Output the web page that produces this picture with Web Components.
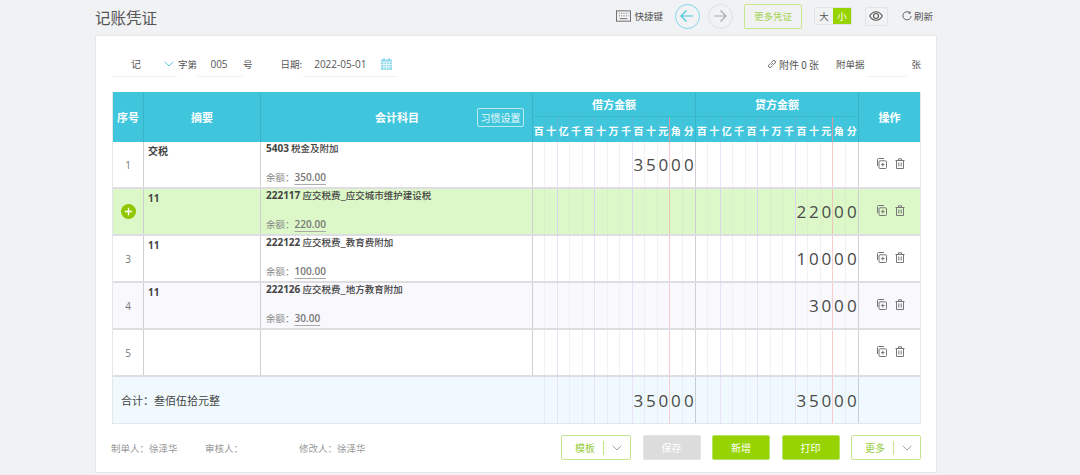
<!DOCTYPE html>
<html lang="zh">
<head>
<meta charset="utf-8">
<title>记账凭证</title>
<style>
  html, body { margin: 0; height: 100%; background: #f1f2f4; overflow: hidden; }
  body { font-family: "Noto Sans CJK SC", "Noto Sans", sans-serif; color: #555; }
</style>
</head>
<body>
<voucher-page></voucher-page>
<script>
const DIGIT_LABELS = ["百", "十", "亿", "千", "百", "十", "万", "千", "百", "十", "元", "角", "分"];

const ICONS = {
  keyboard: `<svg width="15" height="12" viewBox="0 0 16 12" fill="none" stroke="#666" stroke-width="1"><rect x=".5" y=".5" width="15" height="11"/><path d="M3 3h1M5.500 3h1M8 3h1M10.500 3h1M13 3h.5M3 5.800h1M5.500 5.800h1M8 5.800h1M10.500 5.800h1M13 5.800h.5M4 8.800h8"/></svg>`,
  chevron: `<svg width="10" height="6" viewBox="0 0 10 6" fill="none" stroke="currentColor" stroke-width="1"><path d="M.7.700 5 5l4.300-4.300"/></svg>`,
  back: `<svg width="14" height="14" viewBox="0 0 14 14" fill="none" stroke="#45c6e0" stroke-width="1.200"><path d="M13 7H1M6.500 1.500 1 7l5.500 5.500"/></svg>`,
  forward: `<svg width="14" height="14" viewBox="0 0 14 14" fill="none" stroke="#aaa" stroke-width="1.200"><path d="M1 7h12M7.500 1.500 13 7l-5.500 5.500"/></svg>`,
  eye: `<svg width="14" height="10" viewBox="0 0 14 10" fill="none" stroke="#555" stroke-width="1.100"><path d="M.7 5C2.500 1.800 4.500.7 7 .7s4.500 1.100 6.300 4.300C11.500 8.200 9.500 9.300 7 9.300S2.500 8.200.7 5z"/><circle cx="7" cy="5" r="2.500"/></svg>`,
  refresh: `<svg width="10" height="10" viewBox="0 0 11 11" fill="none" stroke="#555" stroke-width="1"><path d="M8.800 2.200A4.500 4.500 0 1 0 10 5.500M9 .5v2H7"/></svg>`,
  link: `<svg width="10" height="10" viewBox="0 0 10 10" fill="none" stroke="#666" stroke-width="1"><path d="M4.200 5.800 5.800 4.200M3.500 4.300 1.700 6.100a1.600 1.600 0 0 0 2.200 2.200l1.800-1.800M6.500 5.700l1.800-1.800a1.600 1.600 0 0 0-2.200-2.200L4.300 3.500"/></svg>`,
  calendar: `<svg width="11" height="12" viewBox="0 0 11 12"><path fill="#8fd9ea" d="M0 1.500h11V12H0z"/><path stroke="#fff" stroke-width=".7" d="M0 4h11M0 6.500h11M0 9h11M3 4v8M5.500 4v8M8 4v8"/><path stroke="#5cc9e2" d="M3 0v2M8 0v2"/></svg>`,
  copy: `<svg width="11" height="11" viewBox="0 0 11 11" fill="none" stroke="#777" stroke-width="1"><path d="M1.500 8V1.500A1 1 0 0 1 2.500.5H8"/><rect x="3" y="2.800" width="7.500" height="7.700" rx="1"/><path d="M6.800 4.800v3.600M5 6.600h3.600"/></svg>`,
  trash: `<svg width="10" height="11" viewBox="0 0 10 11" fill="none" stroke="#777" stroke-width="1"><path d="M.5 2.500h9M3.500 2.500V.8h3v1.700M1.500 2.500v8h7v-8M3.800 4.500v4M6.200 4.500v4"/></svg>`,
  plus: `<svg width="15" height="15" viewBox="0 0 15 15"><circle cx="7.500" cy="7.500" r="7.500" fill="#8fc800"/><path stroke="#fff" stroke-width="1.400" d="M3.800 7.500h7.400M7.500 3.800v7.400"/></svg>`
};

class DigitCells extends HTMLElement {
  connectedCallback() {
    const root = this.shadowRoot || this.attachShadow({ mode: "open" });
    const isHead = this.hasAttribute("head");
    const value = this.getAttribute("value") || "";
    const cells = DIGIT_LABELS.map((label, i) => {
      const digit = value[i - (13 - value.length)] || "";
      const kind = i === 10 ? "red" : (i === 1 || i === 4 || i === 7) ? "purple" : "";
      return `<span class="${kind}">${isHead ? label : digit}</span>`;
    }).join("");
    root.innerHTML = `
      <style>
        :host {
          display: grid;
          grid-template-columns: repeat(13, 1fr);
          height: 100%;
        }
        span {
          display: flex;
          align-items: center;
          justify-content: center;
          box-sizing: border-box;
          border-right: 1px solid var(--digit-line, #f1f1f4);
          font-family: "Open Sans", sans-serif;
          font-size: 17px;
          color: #4a4a4a;
          min-width: 0;
        }
        span:last-child { border-right: 0; }
        .purple { border-right-color: var(--digit-purple, #e8e1f8); }
        .red { border-right-color: var(--digit-red, #f8cccc); }
        :host([head]) span {
          font-family: "Noto Sans CJK SC", sans-serif;
          font-size: 10px;
          font-weight: 700;
          color: #fff;
          padding-top: 1px;
        }
      </style>
      ${cells}
    `;
  }
}
customElements.define("digit-cells", DigitCells);

class VoucherRow extends HTMLElement {
  connectedCallback() {
    const root = this.shadowRoot || this.attachShadow({ mode: "open" });
    const seq = this.getAttribute("seq");
    const note = this.getAttribute("note") || "";
    const code = this.getAttribute("code") || "";
    const name = this.getAttribute("name") || "";
    const balance = this.getAttribute("balance");
    const seqCell = this.hasAttribute("active") ? ICONS.plus : seq;
    const subject = code ? `
      <div class="title"><b>${code}</b> ${name}</div>
      <div class="balance">余额：<u>${balance}</u></div>` : "";
    root.innerHTML = `
      <style>
        :host {
          display: grid;
          grid-template-columns: 31px 117px 272px 163px 163px 1fr;
          height: 47px;
          box-sizing: border-box;
          border-bottom: 2px solid #dddde2;
          background: #fff;
          font-size: 10px;
          color: #444;
        }
        :host([active]) { background: #dcf7c8; --digit-line: #d6efc4; --digit-purple: #d8d3ef; --digit-red: #f0c4b6; }
        :host([tint]) { background: #f8f8fd; }
        .cell { box-sizing: border-box; border-right: 1px solid #cfcfd4; min-width: 0; }
        .cell:last-child { border-right: 0; }
        .seq { display: flex; align-items: center; justify-content: center; color: #777; font-size: 10px; font-family: "Open Sans", sans-serif; }
        .note { padding: 0 0 0 4px; font-weight: 700; line-height: 18px; font-size: 10px; font-family: "Open Sans", "Noto Sans CJK SC", sans-serif; }
        .subject { display: flex; flex-direction: column; justify-content: space-between; padding: 0 0 1px 5px; }
        .title { line-height: 12px; white-space: nowrap; font-size: 9.500px; font-weight: 500; }
        .title b { font-family: "Open Sans", sans-serif; font-weight: 700; font-size: 10px; }
        .balance { color: #888; line-height: 17px; font-size: 9.500px; }
        .balance u { font-family: "Open Sans", sans-serif; font-size: 10px; color: #777; font-weight: 600; text-underline-offset: 3px; text-decoration-color: #aaa; }
        .ops { display: flex; align-items: center; justify-content: center; gap: 8px; padding: 0 0 2px 2px; }
        .ops svg { display: block; }
      </style>
      <div class="cell seq">${seqCell}</div>
      <div class="cell note">${note}</div>
      <div class="cell subject">${subject}</div>
      <div class="cell"><digit-cells value="${this.getAttribute("debit") || ""}"></digit-cells></div>
      <div class="cell"><digit-cells value="${this.getAttribute("credit") || ""}"></digit-cells></div>
      <div class="cell ops">${ICONS.copy}${ICONS.trash}</div>
    `;
  }
}
customElements.define("voucher-row", VoucherRow);

class VoucherTable extends HTMLElement {
  constructor() {
    super();
    this.attachShadow({ mode: "open" });
    this.shadowRoot.innerHTML = `
      <style>
        :host { display: block; border-right: 1px solid #e4e6e8; border-left: 1px solid #e4e6e8; }
        .head {
          display: grid;
          grid-template-columns: 31px 117px 272px 163px 163px 1fr;
          height: 50px;
          background: #3fc6dd;
          color: #fff;
          font-weight: 700;
          font-size: 11px;
          --digit-line: #4dbfd3;
          --digit-purple: #62b5d2;
          --digit-red: #d59aa4;
        }
        .head > div { box-sizing: border-box; border-right: 1px solid #38b3c8; min-width: 0; }
        .head > div:last-child { border-right: 0; }
        .center { display: flex; align-items: center; justify-content: center; }
        .subject { justify-content: space-between; padding: 0 8px 0 114px; }
        .subject button {
          width: 47px;
          height: 19px;
          padding: 0;
          background: none;
          border: 1px solid #bdeaf2;
          border-radius: 2px;
          color: #e8f9fc;
          font: 400 10px "Noto Sans CJK SC", sans-serif;
        }
        .money { display: grid; grid-template-rows: 25px 25px; }
        .money .label { display: flex; align-items: center; justify-content: center; border-bottom: 1px solid #3ab9cf; }
        .total {
          display: grid;
          grid-template-columns: 420px 163px 163px 1fr;
          height: 47px;
          box-sizing: border-box;
          background: #f0fafe;
          border-bottom: 1px solid #e2e6ea;
          color: #444;
          font-size: 11px;
          --digit-line: #e4f0f3;
        }
        .total > div { box-sizing: border-box; border-right: 1px solid #c4ced2; min-width: 0; }
        .total > div:last-child { border-right: 0; }
        .total .sum { display: flex; align-items: center; padding-left: 8px; border-right: 0; }
      </style>
      <div class="head">
        <div class="center">序号</div>
        <div class="center">摘要</div>
        <div class="center subject"><span>会计科目</span><button>习惯设置</button></div>
        <div class="money"><div class="label">借方金额</div><digit-cells head></digit-cells></div>
        <div class="money"><div class="label">贷方金额</div><digit-cells head></digit-cells></div>
        <div class="center">操作</div>
      </div>
      <slot></slot>
      <div class="total">
        <div class="sum">合计：叁佰伍拾元整</div>
        <div><digit-cells value="35000"></digit-cells></div>
        <div><digit-cells value="35000"></digit-cells></div>
        <div></div>
      </div>
    `;
  }
}
customElements.define("voucher-table", VoucherTable);

class ActionButton extends HTMLElement {
  connectedCallback() {
    const root = this.shadowRoot || this.attachShadow({ mode: "open" });
    const menu = this.hasAttribute("menu") ? `<i></i><span class="arrow">${ICONS.chevron}</span>` : "";
    root.innerHTML = `
      <style>
        :host {
          display: flex;
          align-items: center;
          justify-content: center;
          box-sizing: border-box;
          width: 58px;
          height: 25px;
          border-radius: 2px;
          font-size: 10px;
          color: #fff;
          background: #97d300;
          border: 1px solid #b5e36a;
        }
        :host([menu]) {
          width: 70px;
          background: #fff;
          color: #97cc3c;
          border-color: #c4e58e;
          justify-content: flex-end;
        }
        :host([disabled]) { background: #dcdcdc; border-color: #e4e4e4; }
        i { width: 1px; height: 14px; background: #c4e58e; margin: 0 8px 0 8px; }
        .arrow { color: #9aa; display: flex; margin-right: 8px; }
      </style>
      <slot></slot>${menu}
    `;
  }
}
customElements.define("action-button", ActionButton);

class VoucherTopbar extends HTMLElement {
  constructor() {
    super();
    this.attachShadow({ mode: "open" });
    this.shadowRoot.innerHTML = `
      <style>
        :host {
          display: flex;
          align-items: center;
          height: 35px;
          box-sizing: border-box;
          padding: 0 4px 3px 0;
          font-size: 9.500px;
          color: #555;
        }
        h1 { margin: 0 auto 0 0; font-size: 15.500px; font-weight: 400; color: #555; padding-top: 1px; }
        .tool { display: flex; align-items: center; gap: 3px; }
        .tool.refresh { gap: 2px; }
        .round {
          display: flex; align-items: center; justify-content: center;
          width: 25px; height: 25px; box-sizing: border-box;
          border-radius: 50%; border: 1px solid #dfe1e4;
          margin-left: 8px;
        }
        .round.on { border-color: #7fd8ea; margin-left: 12px; }
        .more {
          display: flex; align-items: center; justify-content: center;
          width: 58px; height: 25px; box-sizing: border-box;
          margin: 0 12px 0 11px;
          border: 1px solid #c8e88e; border-radius: 2px;
          color: #a3d24e;
        }
        .size {
          display: flex; width: 38px; height: 18px; box-sizing: border-box;
          border: 1px solid #e0e2e5; border-radius: 2px;
        }
        .size span { flex: 1; display: flex; align-items: center; justify-content: center; }
        .size .on { background: #97d300; color: #fff; }
        .eye {
          display: flex; align-items: center; justify-content: center;
          width: 23px; height: 19px; box-sizing: border-box;
          margin: 0 14px 0 13px;
          border: 1px solid #e2e4e7; border-radius: 2px;
        }
        svg { display: block; }
      </style>
      <h1>记账凭证</h1>
      <div class="tool">${ICONS.keyboard}<span>快捷键</span></div>
      <div class="round on">${ICONS.back}</div>
      <div class="round">${ICONS.forward}</div>
      <div class="more">更多凭证</div>
      <div class="size"><span>大</span><span class="on">小</span></div>
      <div class="eye">${ICONS.eye}</div>
      <div class="tool refresh">${ICONS.refresh}<span>刷新</span></div>
    `;
  }
}
customElements.define("voucher-topbar", VoucherTopbar);

class VoucherFilters extends HTMLElement {
  constructor() {
    super();
    this.attachShadow({ mode: "open" });
    this.shadowRoot.innerHTML = `
      <style>
        :host {
          display: flex;
          align-items: center;
          height: 56px;
          font-size: 9.500px;
          color: #555;
        }
        .field {
          display: flex; align-items: center; box-sizing: border-box;
          height: 25px; margin-top: 0;
          border-bottom: 1px solid #eeeff1;
        }
        .kind { width: 65px; padding: 0 3px 0 19px; justify-content: space-between; color: #5ccbe0; }
        .kind span { color: #555; font-size: 10px; }
        .no { width: 46px; justify-content: center; padding-right: 2px; font-size: 10px; font-family: "Open Sans", sans-serif; }
        .label-date { margin: 0 1px 0 28px; }
        .date { width: 93px; padding: 0 4px 0 11px; justify-content: space-between; font-size: 10px; font-family: "Open Sans", sans-serif; }
        .attach { display: flex; align-items: center; gap: 2px; margin-left: auto; font-size: 10px; }
        .bills { margin-left: 17px; }
        .count { width: 39px; margin: 0 4px 0 4px; }
        svg { display: block; }
      </style>
      <div class="field kind"><span>记</span>${ICONS.chevron}</div>
      <span style="margin-left:1px">字第</span>
      <div class="field no">005</div>
      <span>号</span>
      <span class="label-date">日期:</span>
      <div class="field date">2022-05-01 ${ICONS.calendar}</div>
      <div class="attach">${ICONS.link}<span>附件 0 张</span></div>
      <span class="bills">附单据</span>
      <div class="field count"></div>
      <span>张</span>
    `;
  }
}
customElements.define("voucher-filters", VoucherFilters);

class VoucherFooter extends HTMLElement {
  constructor() {
    super();
    this.attachShadow({ mode: "open" });
    this.shadowRoot.innerHTML = `
      <style>
        :host {
          display: flex;
          align-items: center;
          height: 47px;
          font-size: 9.500px;
          color: #999;
        }
        .people { flex: 1; display: grid; grid-template-columns: 94px 94px auto; justify-content: start; margin-left: -1px; }
        .btns { display: flex; gap: 11.500px; }
      </style>
      <div class="people"><span>制单人：徐泽华</span><span>审核人：</span><span>修改人：徐泽华</span></div>
      <div class="btns"><slot></slot></div>
    `;
  }
}
customElements.define("voucher-footer", VoucherFooter);

class VoucherPage extends HTMLElement {
  constructor() {
    super();
    this.attachShadow({ mode: "open" });
    this.shadowRoot.innerHTML = `
      <style>
        :host { display: block; width: 842px; margin-left: 95px; }
        .card {
          box-sizing: border-box;
          height: 438px;
          padding: 0 15px 0 16px;
          background: #fff;
          border: 1px solid #e6e7e9;
        }
      </style>
      <voucher-topbar></voucher-topbar>
      <div class="card">
        <voucher-filters></voucher-filters>
        <voucher-table>
          <voucher-row seq="1" note="交税" code="5403" name="税金及附加" balance="350.00" debit="35000"></voucher-row>
          <voucher-row active seq="2" note="11" code="222117" name="应交税费_应交城市维护建设税" balance="220.00" credit="22000"></voucher-row>
          <voucher-row seq="3" note="11" code="222122" name="应交税费_教育费附加" balance="100.00" credit="10000"></voucher-row>
          <voucher-row tint seq="4" note="11" code="222126" name="应交税费_地方教育附加" balance="30.00" credit="3000"></voucher-row>
          <voucher-row seq="5"></voucher-row>
        </voucher-table>
        <voucher-footer>
          <action-button menu>模板</action-button>
          <action-button disabled>保存</action-button>
          <action-button>新增</action-button>
          <action-button>打印</action-button>
          <action-button menu>更多</action-button>
        </voucher-footer>
      </div>
    `;
  }
}
customElements.define("voucher-page", VoucherPage);
</script>
</body>
</html>
